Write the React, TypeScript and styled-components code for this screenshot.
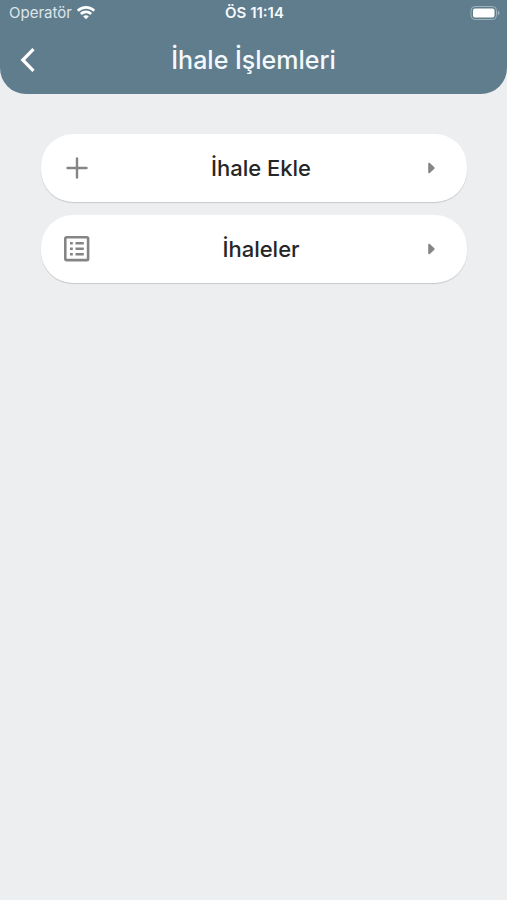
import React from "react";
import styled, { createGlobalStyle } from "styled-components";

const GlobalStyle = createGlobalStyle`
  * { box-sizing: border-box; }
  body {
    margin: 0;
    background: #eceef0;
    font-family: Inter, "Liberation Sans", sans-serif;
  }
`;

const Page = styled.div`
  min-height: 100vh;
  background: #eceef0;
`;

const Header = styled.header`
  background: #607d8d;
  color: #f4f9fc;
  border-radius: 0 0 26px 26px;
`;

const StatusBar = styled.div`
  display: grid;
  grid-template-columns: 1fr auto 1fr;
  align-items: center;
  height: 26px;
  padding: 0 7px 0 9px;
  font-size: 15px;
  line-height: 20px;
`;

const Carrier = styled.span`
  display: flex;
  align-items: center;
  gap: 5px;
  color: #dde6eb;
`;

const Clock = styled.span`
  font-weight: 600;
`;

const Battery = styled.span`
  display: flex;
  justify-content: flex-end;
`;

const NavBar = styled.div`
  display: grid;
  grid-template-columns: 56px 1fr 56px;
  align-items: center;
  height: 68px;
`;

const BackButton = styled.button`
  display: flex;
  align-items: center;
  justify-content: center;
  width: 56px;
  height: 56px;
  padding: 0;
  border: 0;
  background: none;
  color: #ffffff;
  cursor: pointer;
`;

const Title = styled.h1`
  margin: 0;
  font-size: 25px;
  line-height: 32px;
  font-weight: 500;
  text-align: center;
`;

const Menu = styled.nav`
  display: flex;
  flex-direction: column;
  gap: 13px;
  padding: 40px 40px 0 41px;
`;

const MenuButton = styled.button`
  display: grid;
  grid-template-columns: 40px 1fr 24px;
  align-items: center;
  width: 100%;
  height: 68px;
  padding: 0 24px 0 22px;
  border: 0;
  border-radius: 32px;
  background: #ffffff;
  box-shadow: 0 1px 1px rgba(0, 0, 0, 0.16);
  color: #858585;
  font-family: inherit;
  cursor: pointer;

  svg {
    display: block;
  }
`;

const Label = styled.span`
  color: #262626;
  font-size: 22px;
  line-height: 28px;
  font-weight: 500;
  text-align: center;
`;

const WifiIcon = () => (
  <svg width="18" height="14" viewBox="0 0 18 14" fill="#fff" aria-hidden="true">
    <path d="M9 0C5.500 0 2.400 1.300.1 3.500a.4.400 0 0 0 0 .6l1.300 1.300a.4.400 0 0 0 .6 0A10.200 10.200 0 0 1 9 2.700c2.700 0 5.100 1 7 2.700.2.200.4.200.6 0l1.300-1.300a.4.400 0 0 0 0-.6A12.900 12.900 0 0 0 9 0Z" />
    <path d="M9 4.600c-2.200 0-4.200.8-5.700 2.200a.4.400 0 0 0 0 .6l1.300 1.300c.2.200.4.200.6 0A5.600 5.600 0 0 1 9 7.200c1.500 0 2.800.5 3.800 1.500.2.200.4.200.6 0l1.300-1.300a.4.400 0 0 0 0-.6A8.400 8.400 0 0 0 9 4.600Z" />
    <path d="M9 9.200c-1 0-1.800.3-2.500.9a.4.400 0 0 0 0 .6l2.200 2.300c.2.200.4.200.6 0l2.200-2.300a.4.400 0 0 0 0-.6A3.800 3.800 0 0 0 9 9.200Z" />
  </svg>
);

const BatteryIcon = () => (
  <svg width="30" height="14" viewBox="0 0 30 14" aria-hidden="true">
    <rect x="1" y="0.500" width="25.500" height="13" rx="4" fill="none" stroke="#9fb1bb" />
    <rect x="3" y="2.500" width="21.500" height="9" rx="2" fill="#fff" />
    <path d="M27.800 4.500v5c1-.4 1.700-1.400 1.700-2.500s-.7-2.100-1.700-2.500Z" fill="#9fb1bb" />
  </svg>
);

const BackIcon = () => (
  <svg width="16" height="24" viewBox="0 0 16 24" aria-hidden="true">
    <path d="M13.500 1.200 2.800 12l10.700 10.800" fill="none" stroke="currentColor" strokeWidth="3.200" />
  </svg>
);

const PlusIcon = () => (
  <svg width="28" height="28" viewBox="0 0 28 28" aria-hidden="true">
    <path d="M14 4.500v19M4.500 14h19" fill="none" stroke="currentColor" strokeWidth="2.400" strokeLinecap="round" />
  </svg>
);

const ListIcon = () => (
  <svg width="28" height="28" viewBox="0 0 28 28" aria-hidden="true">
    <rect x="2.300" y="2.300" width="22.800" height="22.800" rx="1.200" fill="none" stroke="currentColor" strokeWidth="2.600" />
    <path d="M7 8.200h2.800M7 13.700h2.800M7 19.200h2.800M12.500 8.200h8.300M12.500 13.700h8.300M12.500 19.200h8.300" fill="none" stroke="currentColor" strokeWidth="2.600" />
  </svg>
);

const ArrowIcon = () => (
  <svg width="24" height="24" viewBox="0 0 24 24" aria-hidden="true">
    <path d="M9.200 7.800c0-.9.900-1.300 1.600-.7l4.500 4.100c.5.500.5 1.100 0 1.600l-4.500 4.100c-.7.600-1.600.2-1.600-.7Z" fill="currentColor" />
  </svg>
);

const items = [
  { label: "İhale Ekle", Icon: PlusIcon },
  { label: "İhaleler", Icon: ListIcon },
];

export default function App() {
  return (
    <Page lang="tr">
      <GlobalStyle />
      <Header>
        <StatusBar>
          <Carrier>
            Operatör
            <WifiIcon />
          </Carrier>
          <Clock>ÖS 11:14</Clock>
          <Battery>
            <BatteryIcon />
          </Battery>
        </StatusBar>
        <NavBar>
          <BackButton type="button" aria-label="Geri">
            <BackIcon />
          </BackButton>
          <Title>İhale İşlemleri</Title>
        </NavBar>
      </Header>
      <Menu>
        {items.map(({ label, Icon }) => (
          <MenuButton type="button" key={label}>
            <Icon />
            <Label>{label}</Label>
            <ArrowIcon />
          </MenuButton>
        ))}
      </Menu>
    </Page>
  );
}
